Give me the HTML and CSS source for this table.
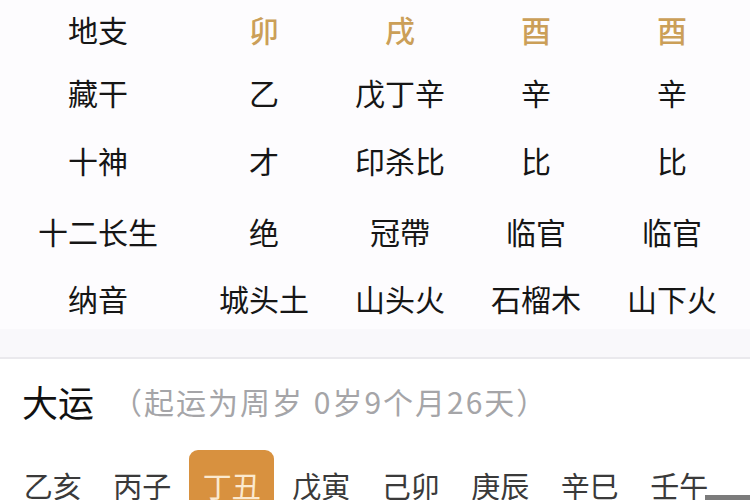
FILE: index.html
```html
<!DOCTYPE html>
<html lang="zh-CN">
<head>
<meta charset="utf-8">
<link rel="stylesheet" href="styles.css">
</head>
<body>
<div class="page">
  <section class="top">
    <div class="pillars">
      <div class="label">地支</div><div class="gold">卯</div><div class="gold">戌</div><div class="gold">酉</div><div class="gold">酉</div>
      <div class="label">藏干</div><div>乙</div><div>戊丁辛</div><div>辛</div><div>辛</div>
      <div class="label">十神</div><div>才</div><div>印杀比</div><div>比</div><div>比</div>
      <div class="label">十二长生</div><div>绝</div><div>冠帶</div><div>临官</div><div>临官</div>
      <div class="label">纳音</div><div>城头土</div><div>山头火</div><div>石榴木</div><div>山下火</div>
    </div>
    <div class="band"></div>
  </section>
  <section class="dayun">
    <div class="head"><span class="title">大运</span><span class="sub">（起运为周岁 0岁9个月26天）</span></div>
    <div class="items">
      <div class="item">乙亥</div>
      <div class="item">丙子</div>
      <div class="item"><span class="active">丁丑</span></div>
      <div class="item">戊寅</div>
      <div class="item">己卯</div>
      <div class="item">庚辰</div>
      <div class="item">辛巳</div>
      <div class="item">壬午</div>
    </div>
  </section>
  <div class="mark"></div>
</div>
</body>
</html>
```
FILE: styles.css
```css
html, body { margin: 0; padding: 0; background: #fff; }
.page {
  position: relative;
  width: 750px;
  height: 500px;
  overflow: hidden;
  font-family: "Noto Sans CJK SC", "Noto Sans", sans-serif;
  color: #161616;
}
.top { background: #fdfcfe; }
.pillars {
  display: grid;
  grid-template-columns: 196px 136px 136px 136px 136px;
  grid-template-rows: 58px 67px 69px 73px 62px;
  font-size: 30px;
  align-items: center;
  justify-items: center;
}
.pillars > div { line-height: 1; white-space: nowrap; }
.gold { color: #cb9f58; font-weight: 500; }
.band {
  height: 28px;
  background: #f9f8fb;
  border-bottom: 2px solid #eae9ed;
}
.dayun { background: #fff; }
.head {
  height: 84px;
  display: flex;
  align-items: center;
  padding-left: 22px;
  gap: 18px;
}
.title { font-size: 36px; color: #111; line-height: 1; }
.sub { font-size: 30px; letter-spacing: 2px; color: #a5a5a8; line-height: 1; word-spacing: 1px; }
.items {
  display: flex;
  padding: 7px 0 0 8px;
}
.item {
  width: 89.5px;
  height: 70px;
  display: flex;
  align-items: center;
  justify-content: center;
  font-size: 29px;
  color: #3a3a3a;
  line-height: 1;
  flex: none;
}
.active {
  width: 85px;
  height: 70px;
  border-radius: 9px;
  background: #d8913f;
  color: #fbe9cf;
  display: flex;
  align-items: center;
  justify-content: center;
}
.mark {
  position: absolute;
  right: 0;
  bottom: 0;
  width: 45px;
  height: 5px;
  background: #7b7b7b;
}
```
